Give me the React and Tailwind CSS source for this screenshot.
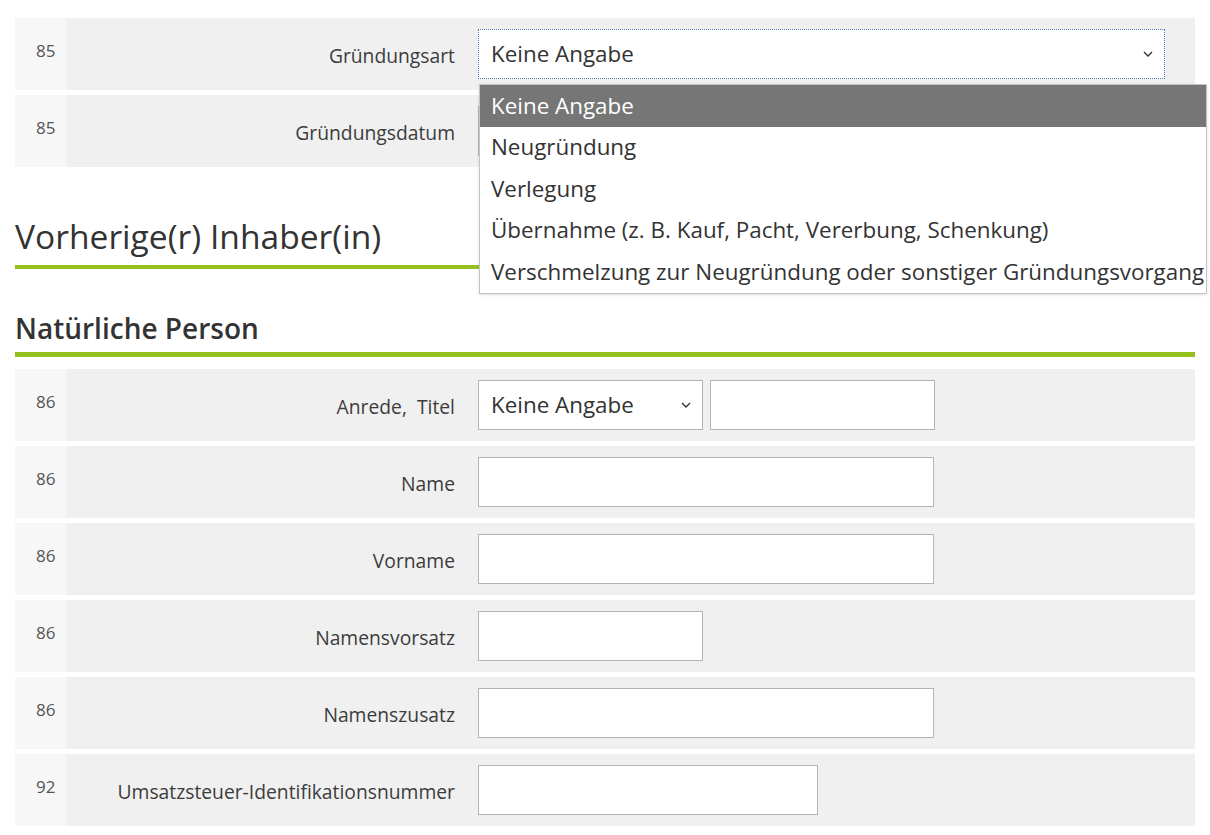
import React from 'react';

const font = { fontFamily: '"Open Sans", "Noto Sans", sans-serif' };

function Chevron() {
  return (
    <svg width="12" height="8" viewBox="0 0 12 8" className="shrink-0">
      <path d="M2 2 L6 6 L10 2" fill="none" stroke="#333" strokeWidth="1.4" />
    </svg>
  );
}

function Row({ nr, label, children }) {
  return (
    <div className="flex h-[72px] items-stretch bg-[#f0f0f0]">
      <div className="flex w-[51px] shrink-0 items-center bg-[#f7f7f7] pb-[6px] pl-[21px] text-[17px] text-[#555]">
        {nr}
      </div>
      <div className="flex w-[389px] shrink-0 items-center justify-end pt-[4px] text-[19.3px] whitespace-nowrap text-[#3c3c3c]">
        {label}
      </div>
      <div className="relative ml-[23px] flex items-center gap-[7px]">{children}</div>
    </div>
  );
}

function Input({ w }) {
  return <div className={`h-[50px] border border-[#b4b4b4] bg-white ${w}`} />;
}

function Select({ w, focused }) {
  return (
    <div
      className={`flex h-[50px] items-center justify-between bg-white pl-[12px] pr-[10px] text-[22.4px] text-[#333] ${w} ${
        focused ? 'border border-dotted border-[#4a78b8]' : 'border border-[#b4b4b4]'
      }`}
    >
      <span>Keine Angabe</span>
      <Chevron />
    </div>
  );
}

const options = [
  'Keine Angabe',
  'Neugründung',
  'Verlegung',
  'Übernahme (z. B. Kauf, Pacht, Vererbung, Schenkung)',
  'Verschmelzung zur Neugründung oder sonstiger Gründungsvorgang',
];

export default function App() {
  return (
    <div className="min-h-[835px] overflow-hidden bg-white pt-[18px] pl-[15px]" style={font}>
      <div className="w-[1180px]">
        <div className="flex flex-col gap-[5px]">
          <Row nr="85" label="Gründungsart">
            <div className="relative">
              <Select w="w-[687px]" focused />
              {/* open dropdown list */}
              <div className="absolute left-[1px] top-[55px] z-10 w-[728px] border border-[#c4c4c4] bg-white text-[22.4px] text-[#333] shadow-sm">
                {options.map((o, i) => (
                  <div
                    key={o}
                    className={`flex h-[41.5px] items-center whitespace-nowrap pl-[11px] ${
                      i === 0 ? 'bg-[#767676] text-white' : ''
                    }`}
                  >
                    {o}
                  </div>
                ))}
              </div>
            </div>
          </Row>
          <Row nr="85" label="Gründungsdatum">
            <Input w="w-[224px]" />
          </Row>
        </div>

        <h2 className="mt-[49px] text-[33.6px] leading-[40px] font-normal text-[#333]">Vorherige(r) Inhaber(in)</h2>
        <div className="mt-[9px] h-[4px] bg-[#95c11f]" />

        <h3 className="mt-[42px] text-[28px] leading-[34px] font-semibold text-[#333]">Natürliche Person</h3>
        <div className="mt-[7px] h-[5px] bg-[#95c11f]" />

        <div className="mt-[12px] flex flex-col gap-[5px]">
          <Row nr="86" label={<span>Anrede,&nbsp; Titel</span>}>
            <Select w="w-[225px]" />
            <Input w="w-[225px]" />
          </Row>
          <Row nr="86" label="Name">
            <Input w="w-[456px]" />
          </Row>
          <Row nr="86" label="Vorname">
            <Input w="w-[456px]" />
          </Row>
          <Row nr="86" label="Namensvorsatz">
            <Input w="w-[225px]" />
          </Row>
          <Row nr="86" label="Namenszusatz">
            <Input w="w-[456px]" />
          </Row>
          <Row nr="92" label="Umsatzsteuer-Identifikationsnummer">
            <Input w="w-[340px]" />
          </Row>
        </div>
      </div>
    </div>
  );
}
